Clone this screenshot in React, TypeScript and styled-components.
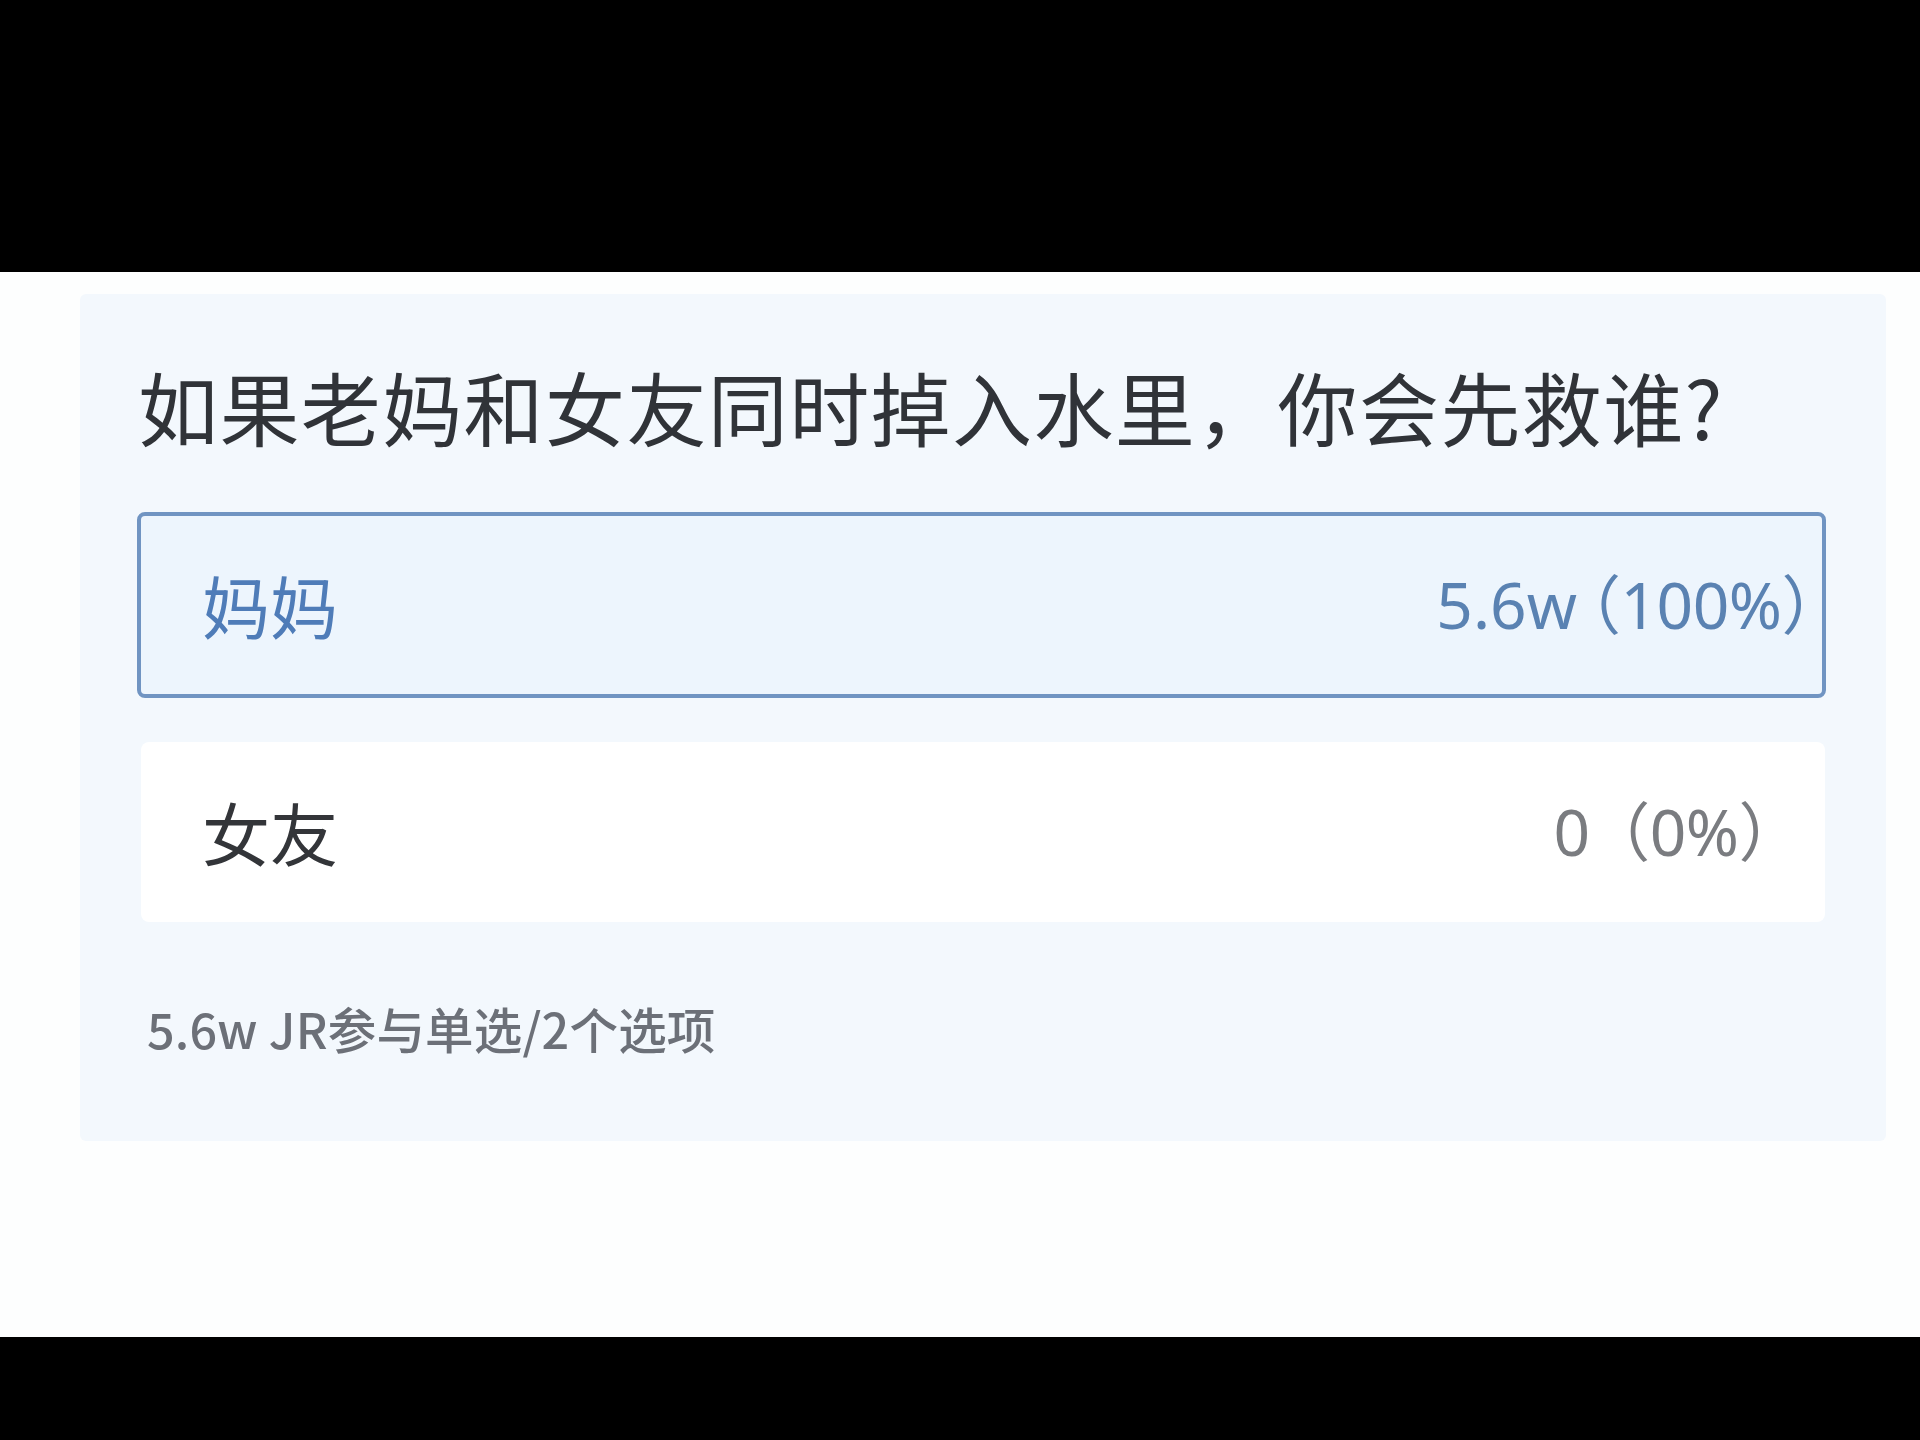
import React from "react";
import styled, { createGlobalStyle } from "styled-components";

const GlobalStyle = createGlobalStyle`
  html, body {
    margin: 0;
    padding: 0;
    background: #000;
  }
  body {
    font-family: "Noto Sans CJK SC", "Noto Sans", sans-serif;
  }
`;

const Screen = styled.div`
  width: 1920px;
  height: 1440px;
  display: flex;
  flex-direction: column;
  background: #000;
`;

const Letterbox = styled.div<{ $h: number }>`
  height: ${(p) => p.$h}px;
  background: #000;
  flex: none;
`;

const Content = styled.main`
  height: 1065px;
  background: #fdfefe;
  padding: 22px 34px 0 80px;
  box-sizing: border-box;
`;

const Card = styled.section`
  height: 847px;
  background: #f3f8fd;
  border-radius: 6px;
  padding: 63px 60px 0 57px;
  box-sizing: border-box;
  display: flex;
  flex-direction: column;
`;

const Question = styled.h2`
  margin: 0 0 59px 1px;
  font-size: 80px;
  line-height: 96px;
  font-weight: 400;
  color: #303338;
  letter-spacing: 1.4px;
`;

const Options = styled.div`
  display: flex;
  flex-direction: column;
  gap: 44px;
`;

const Option = styled.div<{ $selected?: boolean }>`
  box-sizing: border-box;
  height: ${(p) => (p.$selected ? 186 : 180)}px;
  margin: 0 ${(p) => (p.$selected ? 0 : 1)}px 0 ${(p) => (p.$selected ? 0 : 4)}px;
  display: flex;
  align-items: center;
  justify-content: space-between;
  padding: 0 ${(p) => (p.$selected ? 9 : 55)}px 0 61px;
  border-radius: 8px;
  background: ${(p) => (p.$selected ? "#edf5fd" : "#ffffff")};
  border: ${(p) => (p.$selected ? "4px solid #7094c2" : "none")};
`;

const OptionLabel = styled.span<{ $selected?: boolean }>`
  font-size: 68px;
  line-height: 1.2;
  color: ${(p) => (p.$selected ? "#4f7cb8" : "#333539")};
`;

const OptionStat = styled.span<{ $selected?: boolean }>`
  display: flex;
  align-items: baseline;
  gap: ${(p) => (p.$selected ? 12 : 28)}px;
  font-family: "Noto Sans", "Noto Sans CJK SC", sans-serif;
  font-size: 64px;
  line-height: 1.2;
  font-feature-settings: "halt" 1;
  color: ${(p) => (p.$selected ? "#5a82b2" : "#7a7c80")};
`;

const StatCount = styled.span``;

const StatShare = styled.span`
  letter-spacing: -0.5px;
`;

const Footer = styled.div`
  margin: 77px 0 0 10px;
  font-size: 48.5px;
  line-height: 58px;
  font-weight: 500;
  color: #6c7078;
  letter-spacing: 0.2px;
`;

const options = [
  { label: "妈妈", count: "5.6w", share: "（100%）", selected: true },
  { label: "女友", count: "0", share: "（0%）", selected: false },
];

export default function App() {
  return (
    <>
      <GlobalStyle />
      <Screen>
        <Letterbox $h={272} />
        <Content>
          <Card>
            <Question>如果老妈和女友同时掉入水里，你会先救谁?</Question>
            <Options>
              {options.map((o) => (
                <Option key={o.label} $selected={o.selected}>
                  <OptionLabel $selected={o.selected}>{o.label}</OptionLabel>
                  <OptionStat $selected={o.selected}>
                    <StatCount>{o.count}</StatCount>
                    <StatShare>{o.share}</StatShare>
                  </OptionStat>
                </Option>
              ))}
            </Options>
            <Footer>5.6w JR参与单选/2个选项</Footer>
          </Card>
        </Content>
        <Letterbox $h={103} />
      </Screen>
    </>
  );
}
